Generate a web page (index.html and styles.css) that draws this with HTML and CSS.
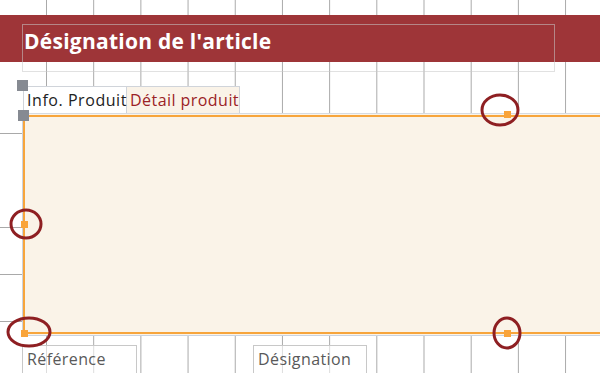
FILE: index.html
```html
<!DOCTYPE html>
<html lang="fr">
<head>
<meta charset="utf-8">
<title>Formulaire</title>
<link rel="stylesheet" href="styles.css">
</head>
<body>
<div class="canvas">
  <header class="band">
    <div class="title-box"><span class="title">Désignation de l'article</span></div>
  </header>
  <nav class="tabs">
    <div class="tab tab-info">Info. Produit</div>
    <div class="tab tab-detail">Détail produit</div>
  </nav>
  <section class="panel"><div class="panel-inner"></div></section>
  <div class="fields">
    <div class="field field-ref">Référence</div>
    <div class="field field-des">Désignation</div>
  </div>

  <span class="handle gray h-tabs"></span>
  <span class="handle gray h-panel"></span>
  <span class="handle orange h-tr"></span>
  <span class="handle orange h-ml"></span>
  <span class="handle orange h-bl"></span>
  <span class="handle orange h-br"></span>

  <svg class="marks" width="600" height="373" viewBox="0 0 600 373">
    <ellipse cx="500" cy="110" rx="18" ry="15"/>
    <ellipse cx="26" cy="224" rx="15" ry="14"/>
    <ellipse cx="29" cy="332" rx="21" ry="14"/>
    <ellipse cx="507" cy="333" rx="13" ry="15"/>
  </svg>
</div>
</body>
</html>
```
FILE: styles.css
```css
html, body {
  margin: 0;
  padding: 0;
}
body {
  width: 600px;
  height: 373px;
  overflow: hidden;
  background: #fff;
  font-family: "Open Sans", "Noto Sans", sans-serif;
}
.canvas {
  position: relative;
  width: 600px;
  height: 373px;
  padding-top: 15px;
  box-sizing: border-box;
  background-color: #fff;
  background-image:
    linear-gradient(to right, #a9a9a9 0, #a9a9a9 1px, transparent 1px),
    linear-gradient(to bottom, #a9a9a9 0, #a9a9a9 1px, transparent 1px);
  background-size: 47.2px 47px, 47.2px 47px;
  background-position: 46px 0, 0 39px;
}
.band {
  height: 47px;
  background: #9e3538;
  padding: 9px 0 0 22px;
  box-sizing: border-box;
}
.title-box {
  width: 533px;
  height: 48px;
  box-sizing: border-box;
  border: 1px solid rgba(200, 200, 200, 0.55);
  padding-left: 1px;
}
.title {
  display: block;
  color: #fff;
  font-weight: 700;
  font-size: 21px;
  line-height: 32px;
  letter-spacing: 0.25px;
}
.tabs {
  display: flex;
  margin-top: 24px;
  padding-left: 23px;
  height: 27px;
}
.tab {
  box-sizing: border-box;
  height: 27px;
  font-size: 16px;
  line-height: 27px;
  padding: 0 2px 0 3px;
  border: 1px solid #d0d4da;
  border-bottom: none;
  white-space: nowrap;
}
.tab-info {
  width: 104px;
  background: #fff;
  color: #222;
  letter-spacing: 0.55px;
}
.tab-detail {
  width: 113px;
  background: #faf3e8;
  color: #9b2226;
  border-left: none;
  padding-left: 3px;
  letter-spacing: 0.45px;
}
.panel {
  margin-left: 22px;
  height: 223px;
  box-sizing: border-box;
  border: 1px solid #cbd3df;
  border-right: none;
  border-top-color: #d6dbe2;
  padding: 1px 0 1px 0;
  background: #faf3e8;
}
.panel-inner {
  height: 100%;
  box-sizing: border-box;
  border-top: 2px solid #f7a53c;
  border-bottom: 2px solid #f7a53c;
  border-left: 2px solid #f7a53c;
}
.fields {
  display: flex;
  margin-top: 9px;
  padding-left: 22px;
  gap: 116px;
}
.field {
  box-sizing: border-box;
  height: 30px;
  width: 115px;
  border: 1px solid #c8c8c8;
  border-bottom: none;
  background: rgba(255, 255, 255, 0.6);
  color: #595959;
  font-size: 16px;
  letter-spacing: 0.4px;
  line-height: 26px;
  padding-left: 4px;
  white-space: nowrap;
}
.field-des {
  width: 114px;
}
.handle {
  position: absolute;
  display: block;
}
.handle.gray {
  width: 11px;
  height: 11px;
  background: #868a92;
}
.handle.orange {
  width: 7px;
  height: 7px;
  background: #f9a43a;
}
.h-tabs { left: 17px; top: 80px; }
.h-panel { left: 18px; top: 110px; }
.h-tr { left: 504px; top: 111px; }
.h-ml { left: 21px; top: 221px; }
.h-bl { left: 21px; top: 330px; }
.h-br { left: 504px; top: 330px; }
.marks {
  position: absolute;
  left: 0;
  top: 0;
  pointer-events: none;
}
.marks ellipse {
  fill: none;
  stroke: #8e1f22;
  stroke-width: 3;
}
```
